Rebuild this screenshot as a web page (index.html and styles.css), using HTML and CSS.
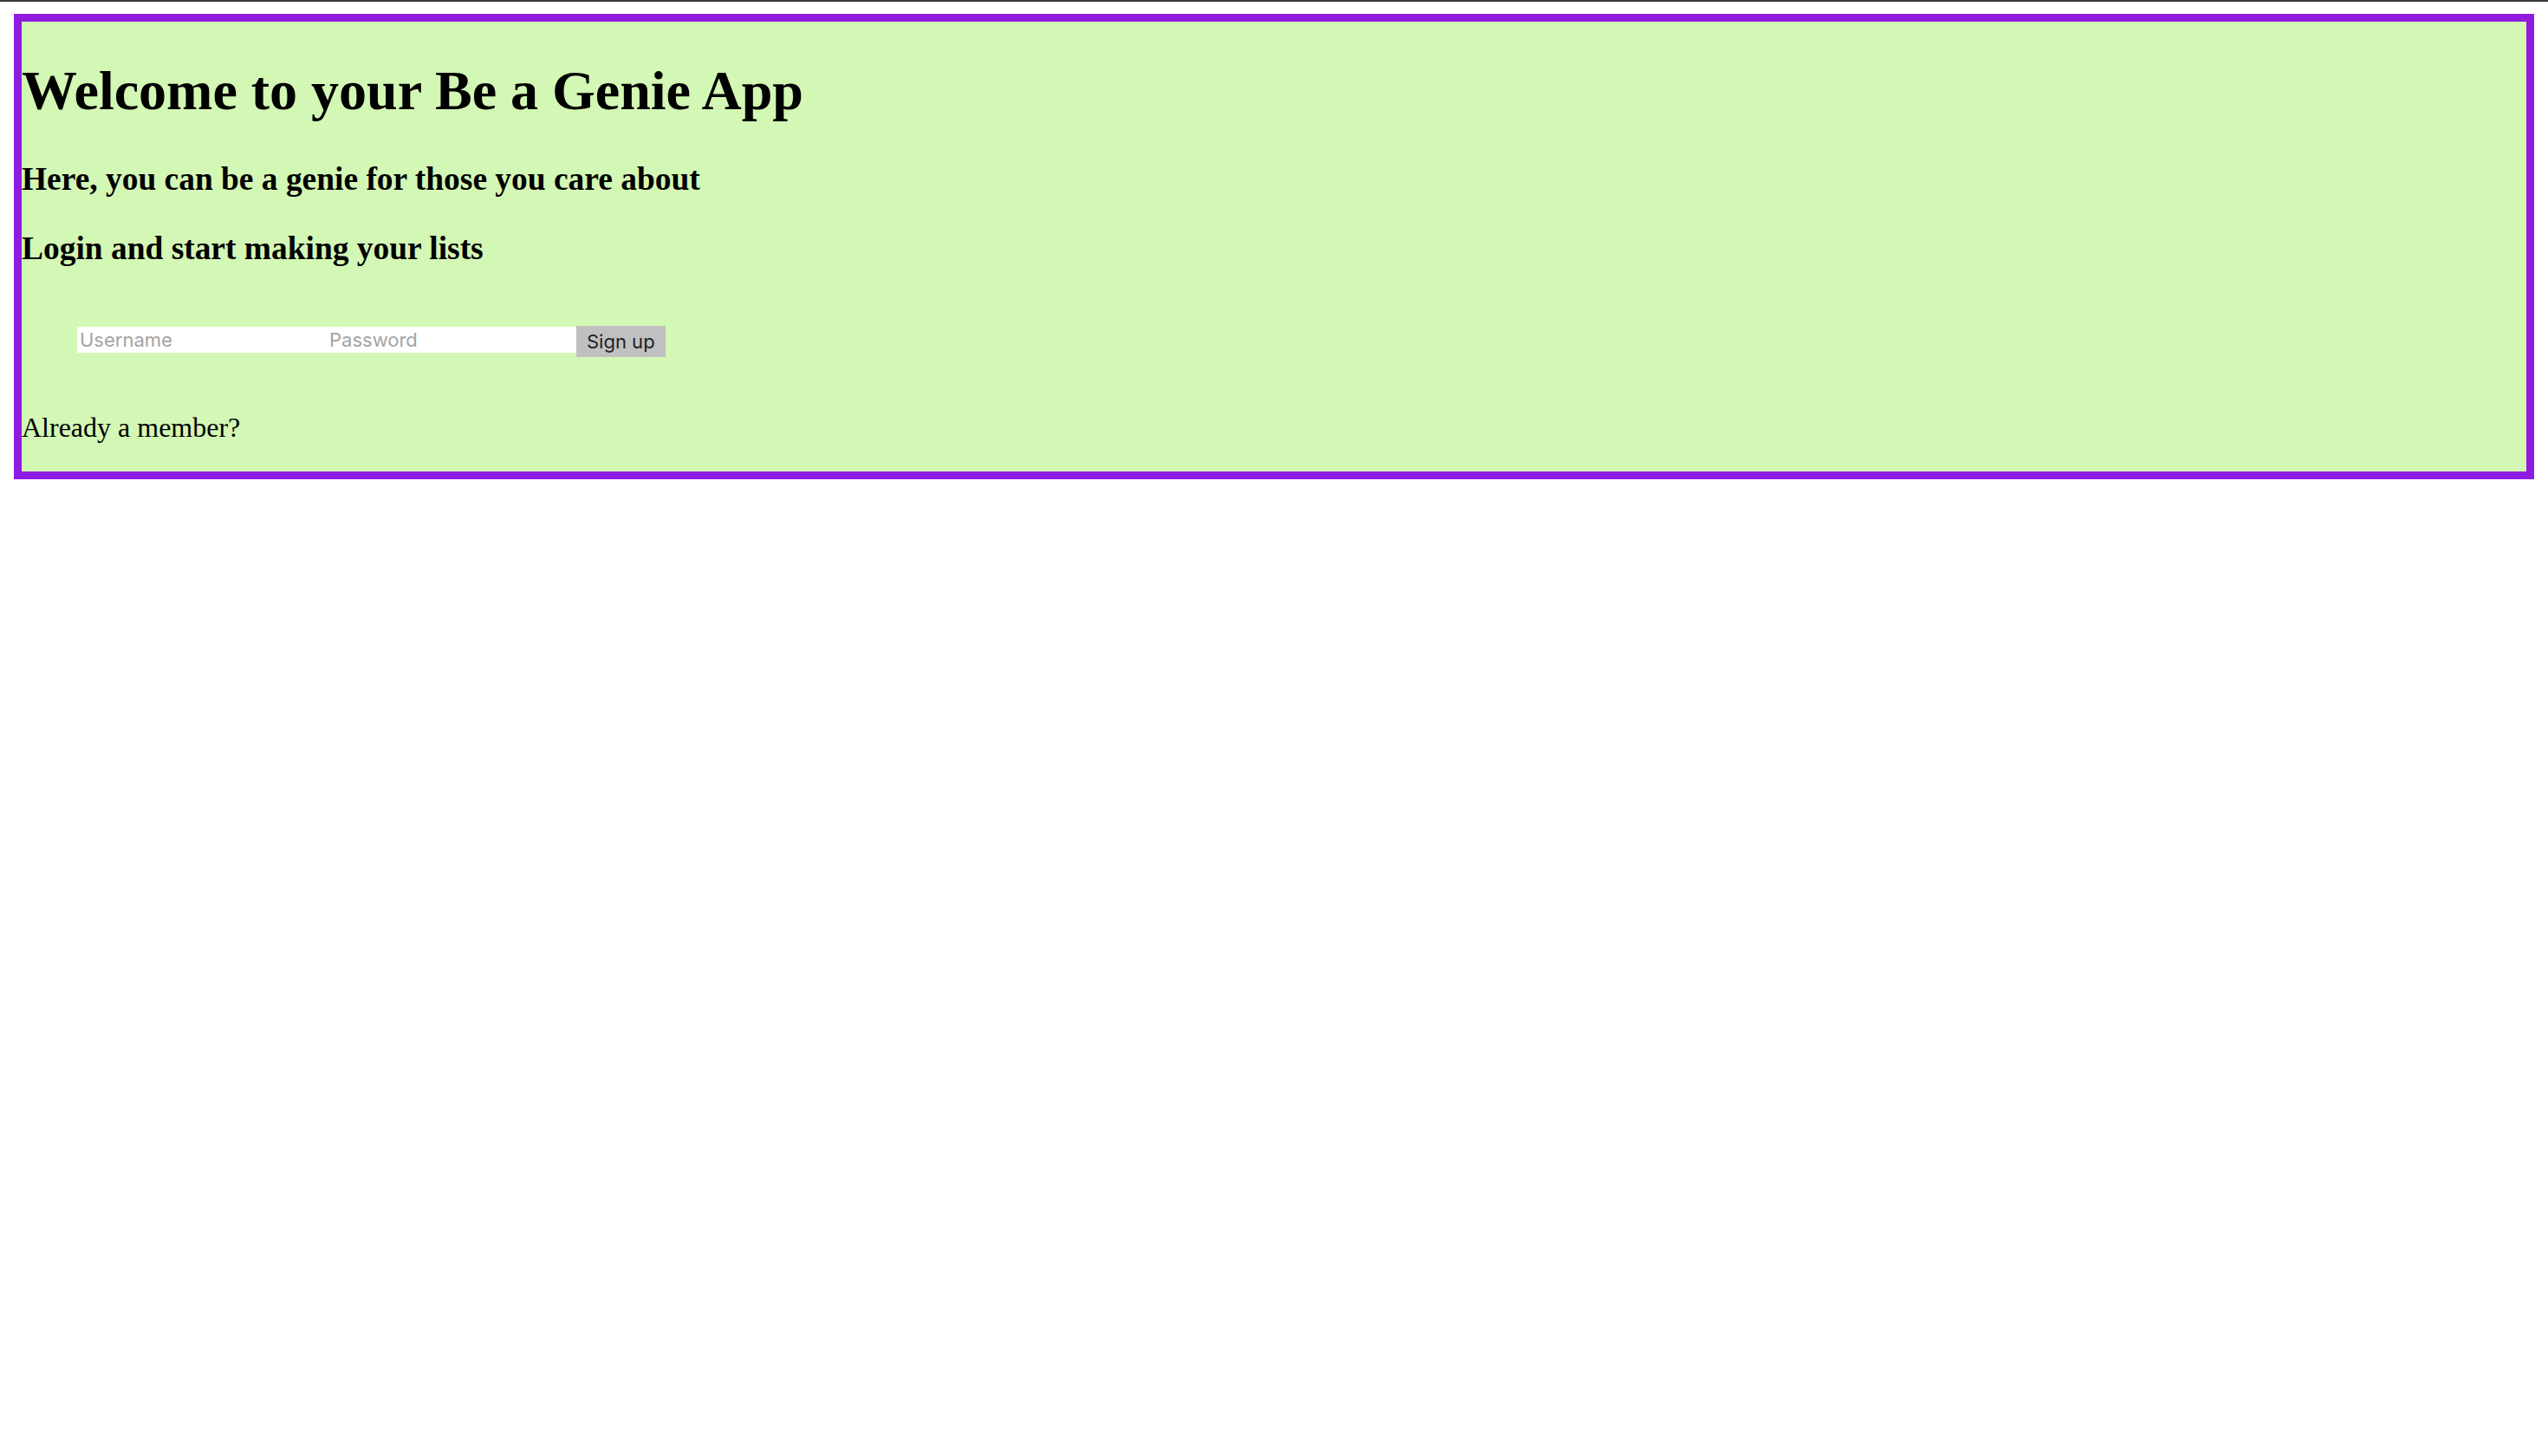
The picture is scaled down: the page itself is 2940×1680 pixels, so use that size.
FILE: index.html
```html
<!DOCTYPE html>
<html lang="en">
<head>
<meta charset="utf-8">
<title>Be a Genie</title>
<link rel="stylesheet" href="styles.css">
</head>
<body>
<div class="app">
  <h1 class="title">Welcome to your Be a Genie App</h1>
  <h3 class="subtitle">Here, you can be a genie for those you care about</h3>
  <h3 class="subtitle">Login and start making your lists</h3>
  <form class="signup">
    <input class="field" type="text" placeholder="Username">
    <input class="field" type="password" placeholder="Password">
    <button class="btn" type="button">Sign up</button>
  </form>
  <p class="member">Already a member?</p>
</div>
</body>
</html>
```
FILE: styles.css
```css
html {
  background: linear-gradient(#3a3a3a 0, #3a3a3a 2px, #ffffff 2px);
  min-height: 100%;
}
body {
  margin: 16px;
  font-family: "Liberation Serif", "Times New Roman", serif;
  color: #000;
}
.app {
  border: 9px solid #8f1be0;
  background: #d3f7b4;
}
.title {
  font-size: 64px;
  font-weight: bold;
  margin: 42.88px 0;
}
.subtitle {
  font-size: 37.44px;
  font-weight: bold;
  margin: 37.44px 0;
}
.signup {
  display: flex;
  align-items: flex-start;
  padding: 30px 64px 31px;
  margin: 0;
}
.field {
  width: 288px;
  height: 30px;
  margin: 1px 0 0 0;
  padding: 0 3px;
  border: none;
  outline: none;
  background: #fff;
  font-family: Inter, "Liberation Sans", sans-serif;
  font-size: 22px;
  color: #000;
  box-sizing: border-box;
}
.field::placeholder {
  color: #a4a4a4;
}
.btn {
  height: 36px;
  margin: 0;
  padding: 0 12px;
  border: none;
  background: #c0c0c0;
  font-family: Inter, "Liberation Sans", sans-serif;
  font-size: 22px;
  color: #1f1f1f;
  box-sizing: border-box;
}
.member {
  font-size: 32px;
  margin: 32px 0;
}
```
